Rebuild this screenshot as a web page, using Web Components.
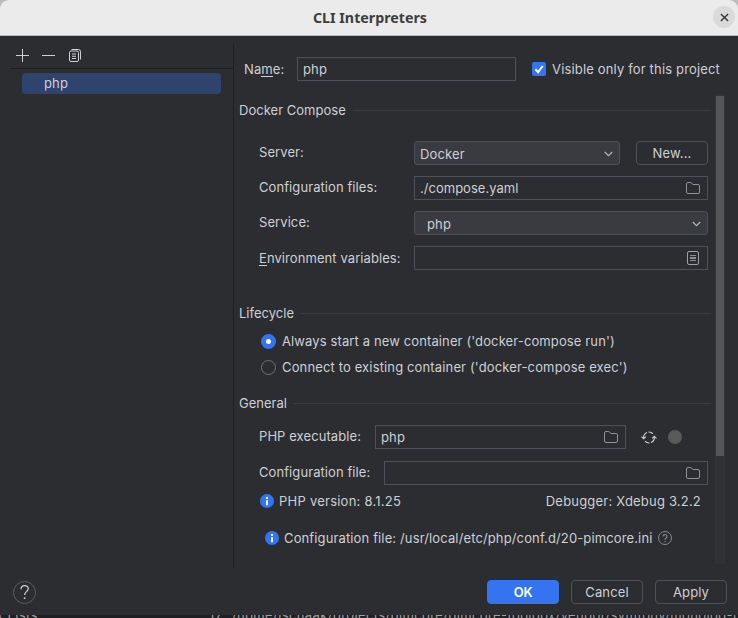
<!DOCTYPE html>
<html lang="en">
<head>
<meta charset="utf-8">
<title>CLI Interpreters</title>
<style>
html,body{margin:0;height:100%;overflow:hidden}
body{background:#1e1f22;font:13px/20px Inter,"Liberation Sans",sans-serif;letter-spacing:.12px;color:#ced0d6}
</style>
</head>
<body>
<cli-dialog></cli-dialog>
<script>
const define = (name, html, setup) => customElements.define(name, class extends HTMLElement {
  connectedCallback() {
    if (this.shadowRoot) return;
    const t = document.createElement('template');
    t.innerHTML = html;
    this.attachShadow({mode: 'open'}).append(t.content.cloneNode(true));
    if (setup) setup(this, this.shadowRoot);
  }
});

const icons = {
  plus: [14, 14, '<path d="M7.5 1v13M1 7.5h13" stroke="#ced0d6"/>', 15],
  minus: [14, 14, '<path d="M1 7.5h13" stroke="#ced0d6"/>', 15],
  copy: [12, 13, '<rect x=".5" y="2" width="9" height="10.500" rx="1.500" stroke="#ced0d6"/><path d="M2.500 .5H9.500A2 2 0 0 1 11.500 2.500V10.500M3 5h4M3 7.250h4M3 9.500h4" stroke="#ced0d6"/>'],
  folder: [14, 12, '<path d="M.5 2A1.500 1.500 0 0 1 2 .5h2.800L7 2.500h5A1.500 1.500 0 0 1 13.500 4v6a1.500 1.500 0 0 1-1.500 1.500H2A1.500 1.500 0 0 1 .5 10z" stroke="#8f9299"/>'],
  doc: [12, 14, '<rect x=".5" y=".5" width="11" height="13" rx="1.500" stroke="#9da0a8"/><path d="M3 4.500h6M3 6.500h6M3 7.500h6M3 9.500h6" stroke="#8b8e94"/>'],
  chevron: [9, 6, '<path d="M.8 1l3.700 3.700L8.200 1" stroke="#b4b8bf" stroke-width="1.100"/>'],
  close: [9, 9, '<path d="M.9.9l7.200 7.200M8.100.9L.9 8.100" stroke="#333" stroke-width="1.350"/>'],
  check: [14, 14, '<rect width="14" height="14" rx="2" fill="#3574f0"/><path d="M3.400 7.300l2.700 2.900L10.700 4" stroke="#fff" stroke-width="2"/>'],
  info: [14, 14, '<circle cx="7" cy="7" r="7" fill="#3574f0"/><path d="M7 3v1.900M7 6.200v5" stroke="#fff" stroke-width="1.900"/>'],
  refresh: [16, 13, '<path d="M2.700 7.500V6.500A5.300 5.300 0 0 1 6 1.400M7.500 1.050A5.400 5.400 0 0 1 12 2.900M13.300 5.500v1A5.300 5.300 0 0 1 10 11.600M8.500 11.950A5.400 5.400 0 0 1 4 10.100M.5 5.600l2.200 2.200L4.900 5.600M11.100 7.400l2.200-2.200 2.200 2.200" stroke="#ced0d6" stroke-width="1.100"/>'],
  help: [14, 14, '<circle cx="7" cy="7" r="6.500" stroke="#868a91"/><path d="M5 5.600a2 2 0 1 1 2.900 1.750Q7 7.800 7 8.800M7 10v1.200" stroke="#868a91" stroke-width="1.100"/>'],
  question: [23, 23, '<circle cx="11.500" cy="11.500" r="11" stroke="#5a5d63"/><path d="M8 8.300c0-5 7.200-4.700 7.200-.6 0 2.900-3.600 3-3.600 6.300" stroke="#ced0d6" stroke-width="1.250"/><circle cx="11.600" cy="17.200" r=".9" fill="#ced0d6"/>'],
  dot: [14, 14, '<circle cx="7" cy="7" r="7" fill="#5a5a5a"/>']
};
define('ui-icon', '<style>:host{display:block;flex:none}svg{display:block}</style>', (el, root) => {
  const [w, h, body, box] = icons[el.getAttribute('name')];
  const W = box || w, H = box || h;
  const t = document.createElement('template');
  t.innerHTML = `<svg width="${W}" height="${H}" viewBox="0 0 ${W} ${H}" fill="none">${body}</svg>`;
  root.append(t.content);
});
define('ui-field', `<style>
:host{display:flex;align-items:center;box-sizing:border-box;height:24px;border:1px solid #4e5157;padding:0 7px 0 5px;white-space:nowrap}
:host([combo]){background:#393b40;border-radius:3px;padding-right:6px}
:host([combo]) ::slotted(ui-icon){margin-top:2px}
:host([combo]) .t{padding-top:1px}
.t{flex:1}</style><span class="t"><slot></slot></span><slot name="icon"></slot>`);
define('ui-button', `<style>
:host{display:flex;align-items:center;justify-content:center;box-sizing:border-box;width:72px;height:24px;border:1px solid #4e5157;border-radius:4px}
:host([primary]){background:#3574f0;border-color:#3574f0;color:#fff;font-weight:600;letter-spacing:-.3px}</style><slot></slot>`);
define('ui-radio', `<style>
:host{display:flex;align-items:center;gap:6px;height:26px;padding-left:22px;white-space:nowrap}
i{box-sizing:border-box;width:15px;height:15px;border-radius:50%;border:1px solid #6f737a}
:host([checked]) i{border:5px solid #3574f0;background:#fff}</style><i></i><slot></slot>`);
define('ui-section', `<style>
:host{display:flex;align-items:center;gap:7px;height:30px;white-space:nowrap;letter-spacing:.02px}
i{flex:1;height:1px;background:#3b3d42}</style><slot></slot><i></i>`);
define('form-row', `<style>
:host{display:flex;height:24px;padding:0 3px 0 20px;white-space:nowrap}
.l{width:var(--label,155px);flex:none;line-height:23px;letter-spacing:.08px}</style><span class="l"><slot name="label"></slot></span><slot></slot>`);
define('interpreter-list', `<style>
:host{display:flex;flex-direction:column;width:234px;box-sizing:border-box;margin:8px 0;height:524px;border-right:1px solid #1e1f22}
.bar{display:flex;align-items:center;gap:11px;height:23px;margin-left:10px;padding:0 0 1px 5px;border-bottom:1px solid #1e1f22}
.bar ui-icon:last-child{margin-left:2px}
.item{margin:4px 12px 0 22px;padding-left:22px;height:21px;line-height:21px;border-radius:4px;background:#2e436e}
</style><div class="bar"><ui-icon name="plus"></ui-icon><ui-icon name="minus"></ui-icon><ui-icon name="copy"></ui-icon></div><div class="item">php</div>`);
define('interpreter-form', `<style>
:host{display:flex;flex-direction:column;flex:1;min-width:0}
.name{display:flex;align-items:center;height:24px;margin:21px 0 14px;padding-left:10px;white-space:nowrap}
.name>span:first-child{width:53px}.name ui-field{width:219px;margin-right:16px}.name ui-icon{margin-right:6px}
.scroll{display:flex;padding-left:5px;height:469px}
.body{width:472px}
.track{width:10px;margin-left:4px;background:#313235}
.thumb{height:360px;width:8px;margin:1px auto 0;background:#555557}
.g{margin-top:11px}
u{text-decoration:none;box-shadow:0 1px #ced0d6;display:inline-block;height:17px;line-height:20px}
.info{display:flex;align-items:center;height:20px;gap:5px;white-space:nowrap}
.grow{flex:1}
.wide{letter-spacing:.2px}
</style>
<div class="name"><span>Na<u>m</u>e:</span><ui-field>php</ui-field><ui-icon name="check"></ui-icon><span style="letter-spacing:.16px">Visible only for this project</span></div>
<div class="scroll"><div class="body">
<ui-section>Docker Compose</ui-section>
<form-row style="margin-top:16px"><span slot="label">Server:</span><ui-field combo style="width:206px;margin-right:16px">Docker<ui-icon slot="icon" name="chevron"></ui-icon></ui-field><ui-button>New...</ui-button></form-row>
<form-row class="g"><span slot="label">Configuration files:</span><ui-field class="grow" style="letter-spacing:.02px">./compose.yaml<ui-icon slot="icon" name="folder"></ui-icon></ui-field></form-row>
<form-row class="g"><span slot="label">Service:</span><ui-field combo class="grow" style="padding-left:12px">php<ui-icon slot="icon" name="chevron"></ui-icon></ui-field></form-row>
<form-row class="g"><span slot="label" style="line-height:24px"><u>E</u>nvironment variables:</span><ui-field class="grow" style="padding-right:8px"><ui-icon slot="icon" name="doc"></ui-icon></ui-field></form-row>
<ui-section style="margin-top:28px">Lifecycle</ui-section>
<ui-radio checked>Always start a new container ('docker-compose run')</ui-radio>
<ui-radio style="letter-spacing:.14px">Connect to existing container ('docker-compose exec')</ui-radio>
<ui-section style="margin-top:8px">General</ui-section>
<form-row style="margin-top:7px;--label:116px"><span slot="label">PHP executable:</span><ui-field style="width:251px">php<ui-icon slot="icon" name="folder"></ui-icon></ui-field><ui-icon name="refresh" style="margin:6px 11px 0 15px"></ui-icon><ui-icon name="dot" style="margin-top:5px"></ui-icon></form-row>
<form-row style="margin-top:12px;--label:125px"><span slot="label">Configuration file:</span><ui-field class="grow"><ui-icon slot="icon" name="folder"></ui-icon></ui-field></form-row>
<div class="info wide" style="margin-top:6px;padding:0 10px 0 21px"><ui-icon name="info"></ui-icon><span class="grow" style="letter-spacing:.24px">PHP version: 8.1.25</span><span>Debugger: Xdebug 3.2.2</span></div>
<div class="info" style="margin-top:17px;padding-left:26px"><ui-icon name="info"></ui-icon><span style="letter-spacing:.13px">Configuration file: /usr/local/etc/php/conf.d/20-pimcore.ini</span><ui-icon name="help"></ui-icon></div>
</div><div class="track"><div class="thumb"></div></div></div>`);
define('cli-dialog', `<style>
:host{display:block;width:738px;height:618px;overflow:hidden}
.win{height:615px;background:#2b2d30;display:flex;flex-direction:column}
header{box-sizing:border-box;height:36px;flex:none;background:#ebebeb;border-bottom:1px solid #b9b9b9;border-radius:9px 9px 0 0;display:grid;grid-template-columns:1fr auto 1fr;align-items:center;color:#3d3d3d;font:bold 14.250px/20px "Noto Sans",sans-serif;letter-spacing:0}
.top{background:#bcbcbc;flex:none}
.title{margin:0 0 0 2px}
.x{justify-self:end;display:grid;place-items:center;width:22px;height:22px;border-radius:50%;background:#dadada;margin-right:3px;margin-top:-1px}
main{display:flex;flex:1;min-height:0}
footer{display:flex;height:35px;padding:0 11px 0 13px;align-items:flex-start;gap:12px}
footer ui-icon{margin:1px auto 0 0}
.strip{height:3px;overflow:hidden;display:flex;background:#1e1f22;color:#a0a2a8;line-height:20px;letter-spacing:.39px;white-space:nowrap}
.strip span{display:block;flex:none;margin-top:-10px}
.strip span:first-child{width:213px;text-indent:-4px;margin-right:-4px}
.strip .n{width:23px}
</style>
<div class="win"><div class="top"><header><span></span><span class="title">CLI Interpreters</span><div class="x"><ui-icon name="close"></ui-icon></div></header></div>
<main><interpreter-list></interpreter-list><interpreter-form></interpreter-form></main>
<footer><ui-icon name="question"></ui-icon><ui-button primary>OK</ui-button><ui-button>Cancel</ui-button><ui-button>Apply</ui-button></footer></div>
<div class="strip"><span>x Lists</span><span class="n">17</span><span>/home/jschaak/projects/pimcore/pimcore-toolbox/vendor/symfony/monolog-bundle</span></div>`);
</script>
</body>
</html>
